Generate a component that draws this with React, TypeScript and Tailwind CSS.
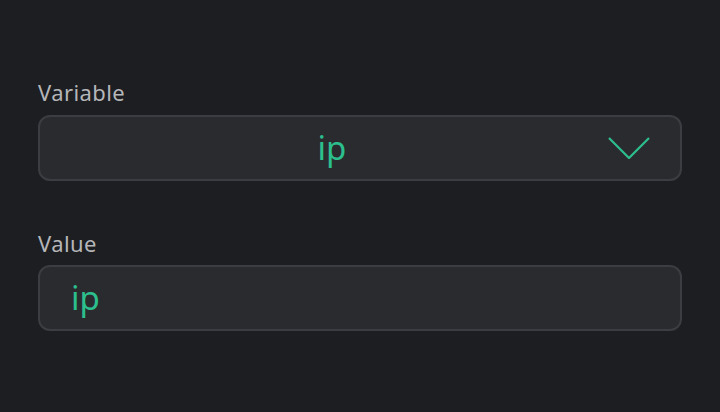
export default function App() {
  return (
    <div
      className="w-[720px] h-[412px] bg-[#1d1e21] px-[38px] pt-[77px] flex flex-col"
      style={{ fontFamily: '"Noto Sans", "Open Sans", sans-serif' }}
    >
      <div className="text-[22px] leading-[30px] tracking-[0.4px] text-[#b5b6b9]">Variable</div>
      <div className="mt-[8px] h-[66px] rounded-[12px] border-2 border-[#3c3d42] bg-[#2a2b2f] relative flex items-center justify-center pr-[56px]">
        <span className="text-[33px] leading-none text-[#2cbf8d] -mt-[2px]">ip</span>
        <svg
          className="absolute right-[30px] top-[20px]"
          width="42"
          height="22"
          viewBox="0 0 42 22"
          fill="none"
        >
          <path d="M1 1 L21 21 L41 1" stroke="#2cbf8d" strokeWidth="2.2" />
        </svg>
      </div>
      <div className="mt-[47px] text-[22px] leading-[30px] tracking-[0.4px] text-[#b5b6b9]">Value</div>
      <div className="mt-[7px] h-[66px] rounded-[12px] border-2 border-[#3c3d42] bg-[#2a2b2f] flex items-center pl-[31px]">
        <span className="text-[33px] leading-none text-[#2cbf8d] -mt-[2px]">ip</span>
      </div>
    </div>
  )
}
